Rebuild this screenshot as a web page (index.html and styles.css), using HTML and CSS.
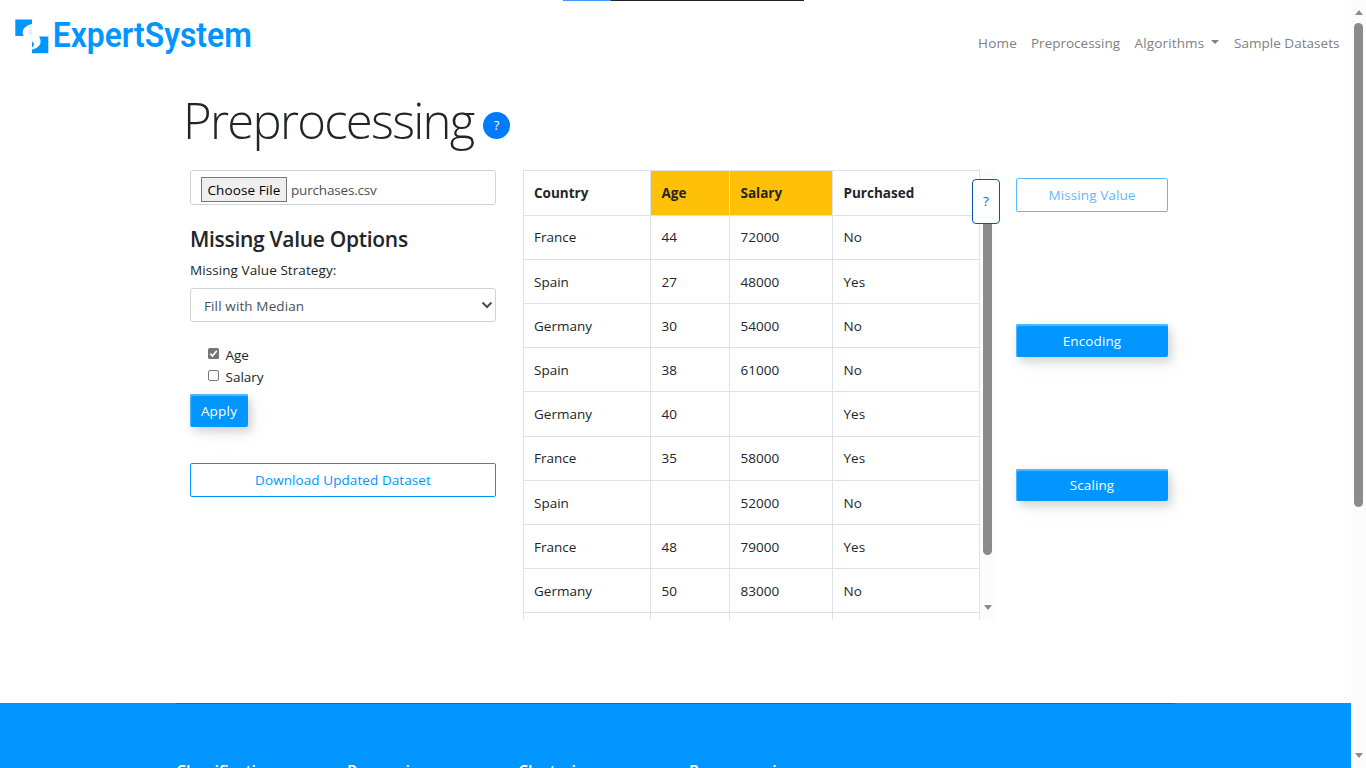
FILE: index.html
```html
<!DOCTYPE html>
<html lang="en">
<head>
<meta charset="utf-8">
<title>Expert System - Preprocessing</title>
<link rel="stylesheet" href="styles.css">
</head>
<body>
<div class="page">
  <header class="navbar">
    <svg class="logo" width="240" height="42" viewBox="0 0 240 42" fill="#0095ff" aria-label="ExpertSystem">
      <path d="M0.300 2.500H17V7C12 8 8 11 7.700 15C7.500 17 8 18 8.700 19H0.300Z"/>
      <path d="M17 9.500C14.500 10.500 13.200 12 13.300 14C13.300 15.500 14 17.500 15 18.500H17Z" opacity=".12"/>
      <path d="M33.300 19.500V36.300H17V32.500C21.500 31.800 25 29 25.500 25.500C25.800 23 25 21 24 19.500Z"/>
      <path d="M17 24.500C19.300 26 19.500 28.800 17 30.500Z"/>
      <text class="logo-text" x="37.800" y="29.500" textLength="199" lengthAdjust="spacingAndGlyphs">ExpertSystem</text>
    </svg>
    <nav class="nav">
      <a class="n1">Home</a><a class="n2">Preprocessing</a><a class="n3">Algorithms<i class="caret"></i></a><a class="n4">Sample Datasets</a>
    </nav>
  </header>
  <main class="main">
    <div class="title"><h1>Preprocessing</h1><span class="help">?</span></div>
    <div class="columns">
      <section class="form">
        <div class="file"><button class="choose">Choose File</button><span class="filename">purchases.csv</span></div>
        <h2>Missing Value Options</h2>
        <label class="strategy">Missing Value Strategy:</label>
        <div class="select"><span>Fill with Median</span>
          <svg width="12" height="8" viewBox="0 0 12 8"><path d="M1.500 1.500L6 6L10.500 1.500" fill="none" stroke="#495057" stroke-width="2"/></svg>
        </div>
        <div class="checks">
          <div class="check"><svg width="11" height="11" viewBox="0 0 11 11"><rect width="11" height="11" rx="1.500" fill="#767676"/><path d="M2.300 5.700L4.500 8L8.800 2.800" fill="none" stroke="#fff" stroke-width="1.700"/></svg><span>Age</span></div>
          <div class="check"><svg width="11" height="11" viewBox="0 0 11 11"><rect x=".5" y=".5" width="10" height="10" rx="1.500" fill="#fff" stroke="#767676"/></svg><span>Salary</span></div>
        </div>
        <button class="solid apply">Apply</button>
        <button class="outline download">Download Updated Dataset</button>
      </section>
      <section class="dataset">
        <div class="tablewrap">
        <table>
          <colgroup><col class="c1"><col class="c2"><col class="c3"><col class="c4"></colgroup>
          <tr><th>Country</th><th class="warn">Age</th><th class="warn">Salary</th><th>Purchased</th></tr>
          <tr class="lift"><td>France</td><td>44</td><td>72000</td><td>No</td></tr>
          <tr><td>Spain</td><td>27</td><td>48000</td><td>Yes</td></tr>
          <tr><td>Germany</td><td>30</td><td>54000</td><td>No</td></tr>
          <tr><td>Spain</td><td>38</td><td>61000</td><td>No</td></tr>
          <tr class="tall"><td>Germany</td><td>40</td><td></td><td>Yes</td></tr>
          <tr class="lift"><td>France</td><td>35</td><td>58000</td><td>Yes</td></tr>
          <tr><td>Spain</td><td></td><td>52000</td><td>No</td></tr>
          <tr><td>France</td><td>48</td><td>79000</td><td>Yes</td></tr>
          <tr><td>Germany</td><td>50</td><td>83000</td><td>No</td></tr>
          <tr><td></td><td></td><td></td><td></td></tr>
        </table>
        </div>
        <div class="scroll inner"><i class="up"></i><i class="thumb"></i><i class="down"></i></div>
        <span class="tip">?</span>
      </section>
      <section class="actions">
        <button class="outline faded">Missing Value</button>
        <button class="solid">Encoding</button>
        <button class="solid scaling">Scaling</button>
      </section>
    </div>
  </main>
  <footer class="footer">
    <div class="footcols"><b>Classification</b><b>Regression</b><b>Clustering</b><b>Preprocessing</b></div>
  </footer>
</div>
<div class="scroll outer"><i class="up"></i><i class="thumb"></i><i class="down"></i></div>
<div class="progress"></div>
</body>
</html>
```
FILE: styles.css
```css
* { box-sizing: border-box; }
body { margin: 0; width: 1366px; height: 768px; overflow: hidden; display: flex; background: #fff; color: #212529; font: 13.5px/22px "Open Sans", "Noto Sans", sans-serif; }
h1, h2 { margin: 0; }
button { font: inherit; padding: 0; display: block; }
.page { width: 1351px; height: 768px; overflow: hidden; display: flex; flex-direction: column; }
.navbar { height: 86px; flex: none; display: flex; justify-content: space-between; padding: 17px 12px 0 15px; }
.logo { flex: none; overflow: visible; }
.logo-text { font: 600 35px Roboto, sans-serif; }
.nav { display: flex; padding-top: 15px; color: #808080; height: 38px; white-space: nowrap; }
.n1 { width: 53px; letter-spacing: .25px; }
.n2 { width: 103.500px; }
.n3 { width: 99.500px; letter-spacing: .15px; }
.n4 { width: 105px; letter-spacing: .03px; }
.caret { display: inline-block; border: 4px solid transparent; border-top-color: #808080; border-bottom: 0; margin-left: 7px; vertical-align: 4px; }
.main { height: 617px; flex: none; padding-left: 190px; }
.title { display: flex; height: 84px; margin-left: -7px; }
h1 { font-size: 49px; line-height: 68px; font-weight: 300; width: 300px; letter-spacing: -1.720px; white-space: nowrap; }
.help { width: 27px; height: 27px; margin-top: 26px; border-radius: 50%; background: #007bff; color: #fff; text-align: center; line-height: 27px; font-size: 13px; }
.columns { display: flex; height: 450px; }
.form { width: 306px; margin-right: 27px; }
.file { height: 35px; border: 1px solid #ced4da; border-radius: 3px; padding: 6px 10px; display: flex; color: #495057; white-space: nowrap; }
.choose { width: 86px; height: 25px; border: 1px solid #767676; background: #efefef; color: #000; line-height: 24px; letter-spacing: .1px; }
.filename { margin-left: 4px; line-height: 27px; letter-spacing: -.18px; }
h2 { font-size: 21px; font-weight: 600; line-height: 28px; margin-top: 20px; white-space: nowrap; letter-spacing: -.3px; }
.strategy { display: block; margin-top: 6px; letter-spacing: .08px; }
.select { height: 34px; margin-top: 7px; border: 1px solid #ced4da; border-radius: 3px; display: flex; align-items: center; justify-content: space-between; padding: 1px 2px 0 13px; color: #495057; letter-spacing: .12px; }
.select svg { margin-bottom: 1px; }
.checks { padding: 22px 0 0 18px; }
.check { display: flex; height: 22px; }
.check svg { margin: 4px 7px 0 0; }
.check span { margin-left: -.5px; }
.solid { background: #0095ff; color: #fff; border: 0; border-radius: 2px; box-shadow: inset 1px 2px 1px #54b8ff, 3px 4px 8px rgba(0,0,0,.14), 6px 8px 20px rgba(0,0,0,.06); }
.apply { width: 58px; height: 33px; margin-top: 6px; letter-spacing: .2px; }
.outline { border: 1px solid #0095ff; color: #0095ff; background: #fff; border-radius: 2px; }
.download { width: 306px; height: 34px; margin-top: 36px; letter-spacing: .08px; }
.dataset { width: 472px; height: 450px; display: flex; position: relative; }
.tablewrap { width: 457px; height: 450px; overflow: hidden; }
table { table-layout: fixed; width: 457px; border-collapse: separate; border-spacing: 0; border-top: 1px solid #dee2e6; border-left: 1px solid #dee2e6; }
.c1 { width: 127px; } .c2 { width: 79px; } .c3 { width: 103px; } .c4 { width: 147px; }
td, th { height: 44px; border-right: 1px solid #dee2e6; border-bottom: 1px solid #dee2e6; padding: 0 0 0 10.500px; text-align: left; }
td:first-child, th:first-child { padding-left: 10px; }
th { height: 45px; font-weight: 700; }
.tall td { height: 45px; }
.lift td { padding-bottom: 2px; }
.warn { background: #ffc107; }
.scroll { width: 15px; background: #fcfcfc; flex: none; display: flex; flex-direction: column; align-items: center; }
.up, .down { border: 4.500px solid transparent; }
.up { border-top: 0; border-bottom: 5px solid #8b8b8b; }
.down { border-bottom: 0; border-top: 5px solid #8b8b8b; margin-top: auto; }
.thumb { width: 9px; background: #8b8b8b; border-radius: 5px; }
.inner { padding: 10px 0; }
.inner .thumb { height: 362px; margin-top: 8px; }
.outer { height: 768px; padding: 10px 0; }
.outer .thumb { height: 484px; margin-top: 8px; }
.tip { position: absolute; left: 449px; top: 9px; width: 28px; height: 45px; border: 1px solid #0056b3; border-radius: 4px; background: #fff; color: #0069c8; text-align: center; line-height: 43px; }
.actions { width: 152px; margin-left: 21px; padding-top: 8px; }
.actions button { width: 152px; height: 33px; margin-bottom: 112px; letter-spacing: .1px; }
.actions .faded { height: 34px; opacity: .65; }
.actions .scaling { height: 32px; margin: 0; }
.footer { height: 65px; flex: none; background: #0095ff; overflow: hidden; }
.footcols { width: 999px; height: 90px; margin-left: 176px; border-top: 1px solid #0073c6; padding-top: 56px; display: flex; color: #fff; font-size: 16px; letter-spacing: -.2px; }
.footcols b { width: 171px; flex: none; font-weight: 600; }
.progress { position: absolute; left: 563px; top: 0; width: 241px; height: 1px; background: linear-gradient(90deg, #3b99fc 48px, #202020 48px); }
```
